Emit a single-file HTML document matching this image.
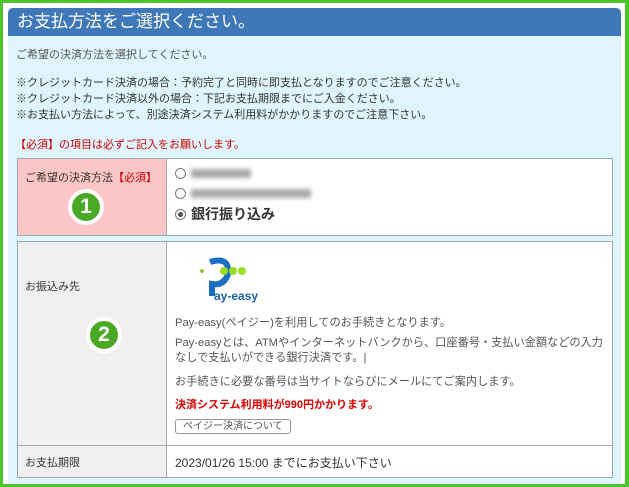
<!DOCTYPE html>
<html><head><meta charset="utf-8"><style>
*{margin:0;padding:0;box-sizing:border-box}
body{width:629px;height:487px;overflow:hidden;background:#fff;font-family:"Liberation Sans","Noto Sans CJK JP",sans-serif;color:#333;position:relative}
.frame{position:absolute;left:0;top:0;width:629px;height:487px;border:3px solid #4dc42a;border-right-width:4px}
.panel{position:absolute;left:8px;top:8px;width:613px;height:476px;background:#dff4fc}
.hd{height:28px;background:#3f78b9;border-radius:5px 5px 0 0;color:#fff;font-size:17px;line-height:28px;padding-left:9px}
.t{position:absolute;font-size:11px;white-space:nowrap}
.tbl{position:absolute;left:9px;width:596px;border:1px solid #9aa;background:#fff}
.lc{position:absolute;left:0;top:0;bottom:0;width:149px;border-right:1px solid #aaa}
.circ{position:absolute;width:36px;height:36px;border-radius:50%;background:#4aa924;border:4px solid #fff;color:#fff;font-weight:bold;font-size:21px;text-align:center;line-height:28px}
.rad{display:inline-block;width:11px;height:11px;border:1px solid #777;border-radius:50%;vertical-align:-1px;margin-right:5px;background:#fff}
.blur{display:inline-block;height:9px;background:#aaa;filter:blur(2px);vertical-align:0}
</style></head><body>
<div class="frame"></div>
<div class="panel">
<div class="hd">お支払方法をご選択ください。</div>
<div class="t" style="left:8px;top:38px;color:#555">ご希望の決済方法を選択してください。</div>
<div class="t" style="left:8px;top:67px;line-height:16px">※クレジットカード決済の場合：予約完了と同時に即支払となりますのでご注意ください。<br>※クレジットカード決済以外の場合：下記お支払期限までにご入金ください。<br>※お支払い方法によって、別途決済システム利用料がかかりますのでご注意下さい。</div>
<div class="t" style="left:7px;top:128px;color:#c00">【必須】の項目は必ずご記入をお願いします。</div>
<div class="tbl" style="top:150px;height:78px">
<div class="lc" style="background:#fdc6c6"></div>
<div class="t" style="left:7px;top:10px">ご希望の決済方法<span style="color:#c00">【必須】</span></div>
<div class="circ" style="left:50px;top:30px">1</div>
<div class="t" style="left:157px;top:5px;line-height:20px;font-size:12px">
<span class="rad"></span><span class="blur" style="width:60px"></span><br>
<span class="rad"></span><span class="blur" style="width:120px"></span><br>
<span class="rad" style="background:radial-gradient(#555 35%,#fff 45%)"></span><span style="font-size:14px;font-weight:bold;color:#333">銀行振り込み</span></div>
</div>
<div class="tbl" style="top:233px;height:237px">
<div class="lc" style="background:#f0f0f0"></div>
<div style="position:absolute;left:0;right:0;top:203px;border-top:1px solid #aaa"></div>
<div class="t" style="left:7px;top:36px">お振込み先</div>
<div class="circ" style="left:68px;top:75px">2</div>
<div class="t" style="left:7px;top:212px">お支払期限</div>
<svg style="position:absolute;left:180px;top:12px" width="60" height="50"><circle cx="4" cy="17" r="2" fill="#8c3"/><path d="M12 8 Q32 2 30 20 Q26 32 14 30 L14 42" stroke="#1a6fc0" stroke-width="6" fill="none"/><circle cx="26" cy="17" r="4" fill="#9d2"/><circle cx="35" cy="17" r="4" fill="#9d2"/><circle cx="44" cy="17" r="4" fill="#9d2"/><text x="16" y="46" font-size="12" font-weight="bold" fill="#1a5fb0" font-family="Liberation Sans">ay-easy</text></svg>
<div class="t" style="left:157px;top:74px;color:#555;font-size:11.2px;line-height:15px">Pay-easy(ペイジー)を利用してのお手続きとなります。</div>
<div class="t" style="left:157px;top:94px;color:#555;font-size:11.2px;line-height:15px">Pay-easyとは、ATMやインターネットバンクから、口座番号・支払い金額などの入力<br>なしで支払いができる銀行決済です。|</div>
<div class="t" style="left:157px;top:131px;color:#555;font-size:11.2px">お手続きに必要な番号は当サイトならびにメールにてご案内します。</div>
<div class="t" style="left:157px;top:154px;color:#d00;font-weight:bold">決済システム利用料が990円かかります。</div>
<div class="t" style="left:157px;top:177px;border:1px solid #999;border-radius:3px;padding:0 7px;font-size:10px;line-height:13px;color:#555">ペイジー決済について</div>
<div class="t" style="left:157px;top:212px;font-size:12px">2023/01/26 15:00 までにお支払い下さい</div>
</div>
</div>
</body></html>
